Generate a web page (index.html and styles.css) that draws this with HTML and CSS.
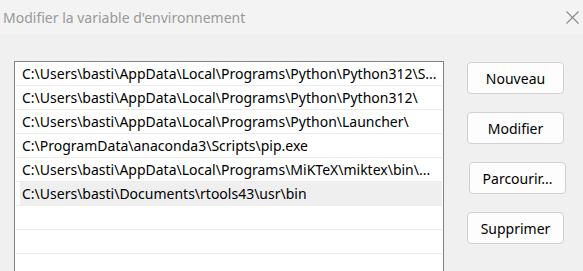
FILE: index.html
```html
<!DOCTYPE html>
<html lang="fr">
<head>
<meta charset="utf-8">
<title>Modifier la variable d'environnement</title>
<link rel="stylesheet" href="styles.css">
</head>
<body>
<div class="dialog">
  <div class="titlebar">
    <span class="title">Modifier la variable d'environnement</span>
    <svg class="close" width="13" height="13" viewBox="0 0 13 13"><path d="M0.5 0.5 L12.5 12.5 M12.5 0.5 L0.5 12.5" stroke="#8a8a8a" stroke-width="1.1" fill="none"/></svg>
  </div>
  <div class="content">
    <div class="list">
      <div class="row">C:\Users\basti\AppData\Local\Programs\Python\Python312\S...</div>
      <div class="row">C:\Users\basti\AppData\Local\Programs\Python\Python312\</div>
      <div class="row">C:\Users\basti\AppData\Local\Programs\Python\Launcher\</div>
      <div class="row">C:\ProgramData\anaconda3\Scripts\pip.exe</div>
      <div class="row">C:\Users\basti\AppData\Local\Programs\MiKTeX\miktex\bin\...</div>
      <div class="row selected">C:\Users\basti\Documents\rtools43\usr\bin</div>
      <div class="row"></div>
      <div class="row"></div>
      <div class="row"></div>
    </div>
    <div class="buttons">
      <button class="btn">Nouveau</button>
      <button class="btn">Modifier</button>
      <button class="btn shifted">Parcourir...</button>
      <button class="btn">Supprimer</button>
    </div>
  </div>
</div>
</body>
</html>
```

FILE: styles.css
```css
html, body {
  margin: 0;
  padding: 0;
  background: #f0f0f0;
  overflow: hidden;
}
.dialog {
  width: 583px;
  height: 271px;
  display: flex;
  flex-direction: column;
  overflow: hidden;
  font-family: "Noto Sans", "Open Sans", sans-serif;
}
.titlebar {
  height: 35px;
  flex: none;
  background: #f3f3f3;
  display: flex;
  align-items: center;
  justify-content: space-between;
  padding: 0 4px 0 3px;
  box-sizing: border-box;
}
.title {
  font-family: "Noto Sans", sans-serif;
  font-size: 14px;
  color: #999999;
  margin-top: -1px;
}
.content {
  flex: 1;
  min-height: 0;
  display: flex;
  padding: 26px 0 0 14px;
  gap: 23px;
}
.list {
  width: 430px;
  box-sizing: border-box;
  border: 1px solid #828282;
  border-bottom: none;
  background: #ffffff;
  padding: 0 1px;
  flex: none;
  overflow: hidden;
}
.row {
  height: 24px;
  box-sizing: border-box;
  border-bottom: 1px solid #ececec;
  padding-left: 6px;
  font-size: 14px;
  line-height: 24px;
  color: #000;
  white-space: nowrap;
  overflow: hidden;
}
.row.selected {
  background: linear-gradient(to right, transparent 4px, #efefef 4px);
  border-bottom-color: #efefef;
}
.buttons {
  display: flex;
  flex-direction: column;
  gap: 18px;
  padding-top: 1px;
}
.btn {
  width: 97px;
  height: 32px;
  flex: none;
  background: #fdfdfd;
  border: 1px solid #d0d0d0;
  border-radius: 4px;
  font-family: "Noto Sans", "Open Sans", sans-serif;
  font-size: 14px;
  color: #000;
  padding: 0;
}
.btn.shifted {
  margin-left: 2px;
}
```
